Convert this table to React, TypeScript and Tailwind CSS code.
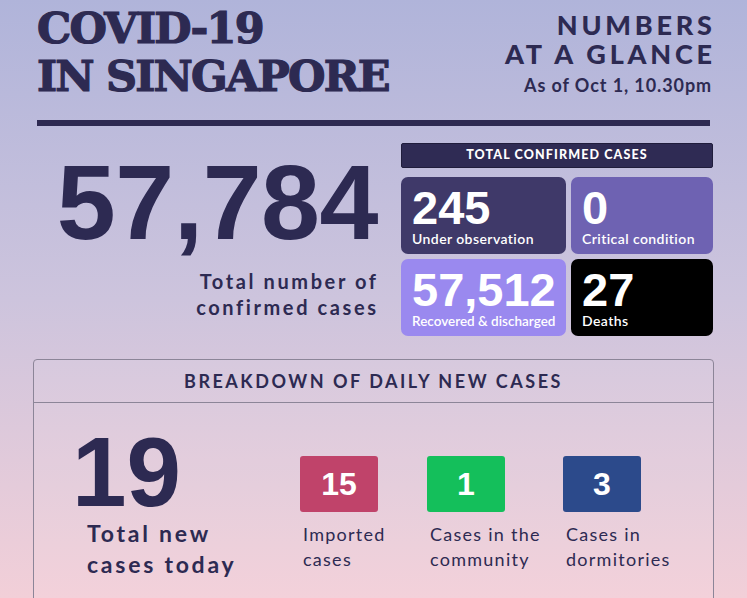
const ink = 'text-[#2d2a52]';

const cards = [
  { value: '245', label: 'Under observation', bg: 'bg-[#3f3969]', labelCls: 'text-[14px] tracking-[0.03em]' },
  { value: '0', label: 'Critical condition', bg: 'bg-[#6e62b2]', labelCls: 'text-[14px] tracking-[0.03em]' },
  { value: '57,512', label: 'Recovered & discharged', bg: 'bg-[#9a89ef]', labelCls: 'text-[13.5px] tracking-normal' },
  { value: '27', label: 'Deaths', bg: 'bg-black', labelCls: 'text-[14px] tracking-[0.03em]' },
];

const breakdown = [
  { value: '15', lines: ['Imported', 'cases'], bg: 'bg-[#c0436a]', width: 'w-[127px]' },
  { value: '1', lines: ['Cases in the', 'community'], bg: 'bg-[#14bf5b]', width: 'w-[136px]' },
  { value: '3', lines: ['Cases in', 'dormitories'], bg: 'bg-[#2c4a8b]', width: 'w-[140px]' },
];

export default function App() {
  return (
    <div className="w-[747px] h-[598px] overflow-hidden bg-linear-to-b from-[#b0b4da] via-[#cdc4dd] to-[#f2cfd8] font-['Lato',sans-serif]">
      {/* Header */}
      <div className="px-[34px] pt-[4px]">
        <div className="flex justify-between">
          <h1
            className={`font-['DejaVu_Serif',serif] font-bold text-[43px] leading-[48px] tracking-[-1.8px] [-webkit-text-stroke:1.2px_#2d2a52] pl-[3px] ${ink}`}
          >
            COVID-19
            <br />
            IN SINGAPORE
          </h1>
          <div className={`text-right ${ink} pt-[6px] pr-[1px]`}>
            <div className="text-[27px] leading-[29px] font-black tracking-[0.14em] mr-[-0.14em]">NUMBERS</div>
            <div className="text-[27px] leading-[29px] font-black tracking-[0.14em] mr-[-0.14em]">AT A GLANCE</div>
            <div className="text-[18px] font-bold tracking-[0.05em] mt-[4px]">As of Oct 1, 10.30pm</div>
          </div>
        </div>
        <div className="h-[6px] bg-[#2e2a52] mt-[20px] mx-[3px]" />
      </div>

      {/* Total confirmed */}
      <div className="flex pl-[37px] mt-[17px]">
        <div className={`w-[341px] shrink-0 text-right ${ink}`}>
          <div className="font-['Liberation_Sans',sans-serif] font-semibold text-[106px] leading-none mt-[6px] tracking-[-0.5px]">
            57,784
          </div>
          <div className="text-[20px] leading-[26px] font-bold tracking-[0.13em] mr-[-0.13em] pr-[2px] mt-[13px]">
            Total number of
            <br />
            confirmed cases
          </div>
        </div>
        <div className="ml-[23px] w-[312px] shrink-0">
          <div className="h-[25px] bg-[#2f2b54] border border-[#201d3c] rounded-[2px] flex items-center justify-center text-white text-[12.5px] font-black tracking-[0.09em]">
            TOTAL CONFIRMED CASES
          </div>
          <div className="grid grid-cols-[165px_142px] gap-[5px] mt-[9px]">
            {cards.map((c) => (
              <div key={c.label} className={`${c.bg} h-[77px] rounded-[7px] px-[11px] pt-[9px] text-white`}>
                <div className="font-['Liberation_Sans',sans-serif] font-bold text-[47px] leading-[43px]">
                  {c.value}
                </div>
                <div className={`${c.labelCls} leading-[18px] font-semibold mt-[1px] whitespace-nowrap`}>
                  {c.label}
                </div>
              </div>
            ))}
          </div>
        </div>
      </div>

      {/* Breakdown */}
      <div className="mx-[33px] mt-[23px] h-[260px] border border-[#8c8598] rounded-[4px] bg-white/5">
        <div
          className={`h-[43px] border-b border-[#8c8598] flex items-center justify-center text-[18px] font-bold tracking-[0.14em] ${ink}`}
        >
          BREAKDOWN OF DAILY NEW CASES
        </div>
        <div className="flex">
          <div className={`w-[266px] ${ink}`}>
            <div className="font-['Liberation_Sans',sans-serif] font-bold text-[98px] leading-[80px] mt-[29px] pl-[38px]">
              19
            </div>
            <div className="text-[23px] leading-[31px] font-bold tracking-[0.12em] mt-[6px] pl-[53px] whitespace-nowrap">
              Total new
              <br />
              cases today
            </div>
          </div>
          {breakdown.map((b) => (
            <div key={b.value} className={`${b.width} pt-[53px]`}>
              <div
                className={`${b.bg} w-[78px] h-[56px] rounded-[3px] flex items-center justify-center text-white font-['Liberation_Sans',sans-serif] font-bold text-[32px]`}
              >
                {b.value}
              </div>
              <div className={`text-[18px] leading-[25px] tracking-[0.07em] mt-[10px] pl-[3px] whitespace-nowrap ${ink}`}>
                {b.lines[0]}
                <br />
                {b.lines[1]}
              </div>
            </div>
          ))}
        </div>
      </div>
    </div>
  );
}
